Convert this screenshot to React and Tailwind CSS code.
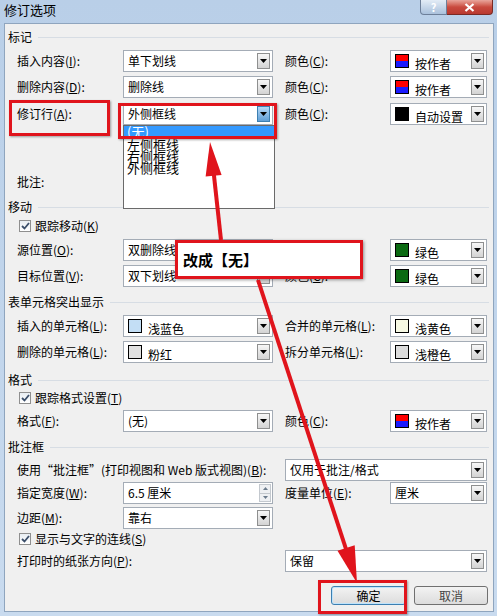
import React from 'react';

// Word 2010 "修订选项" dialog, with the red tutorial annotations on top

const RED = '#e0141c';

function DropArrow({ active }) {
  return (
    <div
      className={`m-[2px] flex w-[13px] shrink-0 items-center justify-center self-stretch border ${
        active
          ? 'border-[#3c7fb1] bg-linear-to-b from-[#b4d8f6] to-[#5f9fd6]'
          : 'border-[#8e8f8f] bg-linear-to-b from-[#f7f7f7] to-[#d3d3d3]'
      }`}
    >
      <svg width="7" height="4" viewBox="0 0 7 4">
        <path d="M0 0h7L3.5 4z" fill="#000" />
      </svg>
    </div>
  );
}

function Combo({ w, active, children }) {
  return (
    <div className={`flex h-[22px] shrink-0 items-stretch border border-[#a4acb6] bg-white ${w}`}>
      <div className="flex min-w-0 flex-1 items-center overflow-hidden whitespace-nowrap pl-[4px]">{children}</div>
      <DropArrow active={active} />
    </div>
  );
}

function Swatch({ color, split }) {
  if (split) {
    return (
      <div className="flex h-[14px] w-[14px] shrink-0 flex-col border border-black">
        <div className="flex-1 bg-[#ff0000]" />
        <div className="flex-1 bg-[#1b1bff]" />
      </div>
    );
  }
  return <div className={`h-[14px] w-[14px] shrink-0 border border-black ${color}`} />;
}

function ColorValue({ color, split, text }) {
  return (
    <>
      <Swatch color={color} split={split} />
      <span className="ml-[6px] mt-[5px]">{text}</span>
    </>
  );
}

function Header({ children, mt }) {
  return (
    <div className={`ml-[3px] mr-[4px] flex h-[16px] items-center ${mt}`}>
      <span>{children}</span>
      <div className="ml-[6px] h-px flex-1 bg-[#d7dde4]" />
    </div>
  );
}

function Row({ mt, children }) {
  return <div className={`ml-[12px] flex h-[22px] items-center ${mt}`}>{children}</div>;
}

function Label({ w = 'w-[106px]', children }) {
  return <span className={`shrink-0 whitespace-nowrap ${w}`}>{children}</span>;
}

function Check({ mt, children }) {
  return (
    <div className={`ml-[14px] flex h-[16px] items-center ${mt}`}>
      <div className="flex h-[12px] w-[12px] items-center justify-center border border-[#8f8f8f] bg-linear-to-b from-[#e9eef3] to-[#ffffff]">
        <svg width="9" height="8" viewBox="0 0 9 8">
          <path d="M1 4l2.5 2.5L8 1" fill="none" stroke="#3b4e6a" strokeWidth="1.8" />
        </svg>
      </div>
      <span className="ml-[4px]">{children}</span>
    </div>
  );
}

export default function App() {
  return (
    <div className="relative h-[616px] w-[497px] overflow-hidden bg-linear-to-b from-[#b9cfe8] to-[#c9dbef] font-['Noto_Sans_CJK_SC','Noto_Sans',sans-serif] text-[12px] leading-[14px] text-black">
      {/* title bar */}
      <div className="flex h-[23px] items-start justify-between pr-[4px]">
        <span className="pl-[4px] pt-[3px] text-[13px]">修订选项</span>
        <div className="flex">
          <div className="flex h-[15px] w-[27px] items-center justify-center rounded-bl-[4px] border border-t-0 border-[#6d7f99] bg-linear-to-b from-[#e3ecf6] to-[#aac1dc] text-[11px] font-bold text-white">
            ?
          </div>
          <div className="flex h-[15px] w-[46px] items-center justify-center rounded-br-[4px] border border-l-0 border-t-0 border-[#7a2a24] bg-linear-to-b from-[#e8a59c] via-[#c94a3f] to-[#b93a30]">
            <svg width="11" height="9" viewBox="0 0 11 9">
              <path d="M1.5 1l8 7M9.5 1l-8 7" stroke="#fff" strokeWidth="2.2" />
            </svg>
          </div>
        </div>
      </div>

      {/* dialog body */}
      <div className="mx-[4px] flex h-[589px] w-[490px] flex-col border border-[#8fa5be] bg-[#f0f0f0] pt-[5px]">
        <Header>标记</Header>
        <Row mt="mt-[5px]">
          <Label>插入内容(<u>I</u>):</Label>
          <Combo w="w-[150px]">单下划线</Combo>
          <Label w="ml-[12px] w-[105px]">颜色(<u>C</u>):</Label>
          <Combo w="w-[97px]"><ColorValue split text="按作者" /></Combo>
        </Row>
        <Row mt="mt-[4px]">
          <Label>删除内容(<u>D</u>):</Label>
          <Combo w="w-[150px]">删除线</Combo>
          <Label w="ml-[12px] w-[105px]">颜色(<u>C</u>):</Label>
          <Combo w="w-[97px]"><ColorValue split text="按作者" /></Combo>
        </Row>
        <Row mt="mt-[5px]">
          <Label>修订行(<u>A</u>):</Label>
          <Combo w="w-[150px]" active>外侧框线</Combo>
          <Label w="ml-[12px] w-[105px]">颜色(<u>C</u>):</Label>
          <Combo w="w-[97px]"><ColorValue color="bg-black" text="自动设置" /></Combo>
        </Row>
        <Row mt="mt-[46px]">
          <Label>批注:</Label>
        </Row>

        <Header mt="mt-[6px]">移动</Header>
        <Check mt="mt-[3px]">跟踪移动(<u>K</u>)</Check>
        <Row mt="mt-[5px]">
          <Label>源位置(<u>O</u>):</Label>
          <Combo w="w-[150px]">双删除线</Combo>
          <Label w="ml-[12px] w-[105px]">颜色(<u>C</u>):</Label>
          <Combo w="w-[97px]"><ColorValue color="bg-[#0b6a12]" text="绿色" /></Combo>
        </Row>
        <Row mt="mt-[4px]">
          <Label>目标位置(<u>V</u>):</Label>
          <Combo w="w-[150px]">双下划线</Combo>
          <Label w="ml-[12px] w-[105px]">颜色(<u>C</u>):</Label>
          <Combo w="w-[97px]"><ColorValue color="bg-[#0b6a12]" text="绿色" /></Combo>
        </Row>

        <Header mt="mt-[7px]">表单元格突出显示</Header>
        <Row mt="mt-[5px]">
          <Label>插入的单元格(<u>L</u>):</Label>
          <Combo w="w-[150px]"><ColorValue color="bg-[#c3def5]" text="浅蓝色" /></Combo>
          <Label w="ml-[12px] w-[105px]">合并的单元格(<u>L</u>):</Label>
          <Combo w="w-[97px]"><ColorValue color="bg-[#f6f8e2]" text="浅黄色" /></Combo>
        </Row>
        <Row mt="mt-[4px]">
          <Label>删除的单元格(<u>L</u>):</Label>
          <Combo w="w-[150px]"><ColorValue color="bg-[#e1e1e1]" text="粉红" /></Combo>
          <Label w="ml-[12px] w-[105px]">拆分单元格(<u>L</u>):</Label>
          <Combo w="w-[97px]"><ColorValue color="bg-[#dcdcdc]" text="浅橙色" /></Combo>
        </Row>

        <Header mt="mt-[9px]">格式</Header>
        <Check mt="mt-[2px]">跟踪格式设置(<u>T</u>)</Check>
        <Row mt="mt-[4px]">
          <Label>格式(<u>F</u>):</Label>
          <Combo w="w-[150px]">(无)</Combo>
          <Label w="ml-[12px] w-[105px]">颜色(<u>C</u>):</Label>
          <Combo w="w-[97px]"><ColorValue split text="按作者" /></Combo>
        </Row>

        <Header mt="mt-[7px]">批注框</Header>
        <Row mt="mt-[4px]">
          <Label w="w-[268px]">使用“批注框”(打印视图和 Web 版式视图)(<u>B</u>):</Label>
          <Combo w="w-[202px]">仅用于批注/格式</Combo>
        </Row>
        <Row mt="mt-[1px]">
          <Label>指定宽度(<u>W</u>):</Label>
          <div className="flex h-[22px] w-[150px] shrink-0 items-stretch border border-[#a4acb6] bg-white">
            <div className="flex flex-1 items-center pl-[4px]">6.5 厘米</div>
            <div className="my-[1px] mr-[1px] flex w-[12px] flex-col">
              <div className="flex flex-1 items-center justify-center border border-[#c3c8ce] bg-[#eef0f3]">
                <svg width="5" height="3" viewBox="0 0 5 3"><path d="M0 3h5L2.5 0z" fill="#6b7b8c" /></svg>
              </div>
              <div className="flex flex-1 items-center justify-center border border-t-0 border-[#c3c8ce] bg-[#eef0f3]">
                <svg width="5" height="3" viewBox="0 0 5 3"><path d="M0 0h5L2.5 3z" fill="#6b7b8c" /></svg>
              </div>
            </div>
          </div>
          <Label w="ml-[12px] w-[105px]">度量单位(<u>E</u>):</Label>
          <Combo w="w-[97px]">厘米</Combo>
        </Row>
        <Row mt="mt-[3px]">
          <Label>边距(<u>M</u>):</Label>
          <Combo w="w-[150px]">靠右</Combo>
        </Row>
        <Check mt="mt-[2px]">显示与文字的连线(<u>S</u>)</Check>
        <Row mt="mt-[3px]">
          <Label w="w-[268px]">打印时的纸张方向(<u>P</u>):</Label>
          <Combo w="w-[202px]">保留</Combo>
        </Row>

        <div className="mr-[5px] mt-[14px] flex justify-end gap-[8px]">
          <div className="flex h-[19px] w-[75px] items-center justify-center rounded-[3px] border border-[#3c7fb1] bg-linear-to-b from-[#f3f3f3] to-[#dcdcdc] shadow-[inset_0_0_0_1px_#bfe3fb]">
            确定
          </div>
          <div className="flex h-[19px] w-[74px] items-center justify-center rounded-[3px] border border-[#707070] bg-linear-to-b from-[#f3f3f3] to-[#dcdcdc] text-[#444]">
            取消
          </div>
        </div>
      </div>

      {/* open dropdown list of 修订行 */}
      <div className="absolute left-[123px] top-[125px] h-[84px] w-[152px] border border-[#6a6a6a] bg-white text-[13px]">
        <div className="h-[11px] bg-[#3399ff] pl-[3px] leading-[11px] text-white">(无)</div>
        <div className="pl-[3px] pt-[2px]">
          <div className="h-[11.5px] leading-[11.5px]">左侧框线</div>
          <div className="h-[11.5px] leading-[11.5px]">右侧框线</div>
          <div className="h-[11.5px] leading-[11.5px]">外侧框线</div>
        </div>
      </div>

      {/* annotations */}
      <div className="absolute left-[9px] top-[100px] h-[36px] w-[101px] border-[3px] border-[#e0141c] shadow-[1px_1px_2px_rgba(0,0,0,0.35)]" />
      <div className="absolute left-[118px] top-[103px] h-[36px] w-[159px] border-[3px] border-[#e0141c] shadow-[1px_1px_2px_rgba(0,0,0,0.35)]" />
      <div className="absolute left-[175px] top-[240px] flex h-[39px] w-[188px] items-center border-[3px] border-[#e0141c] bg-white pl-[5px] text-[15px] font-semibold shadow-[1px_1px_3px_rgba(0,0,0,0.4)]">
        改成【无】
      </div>
      <div className="absolute left-[318px] top-[580px] h-[34px] w-[89px] border-[3px] border-[#e0141c] shadow-[1px_1px_2px_rgba(0,0,0,0.35)]" />

      <svg className="pointer-events-none absolute inset-0" width="497" height="616" viewBox="0 0 497 616">
        <line x1="221" y1="240" x2="213.6" y2="172" stroke={RED} strokeWidth="4" />
        <polygon points="210,142 221.6,175 205.6,176.6" fill={RED} />
        <line x1="258" y1="280" x2="346" y2="549" stroke={RED} strokeWidth="4" />
        <polygon points="357,583 354.7,545.2 337.5,550.8" fill={RED} />
      </svg>
    </div>
  );
}
